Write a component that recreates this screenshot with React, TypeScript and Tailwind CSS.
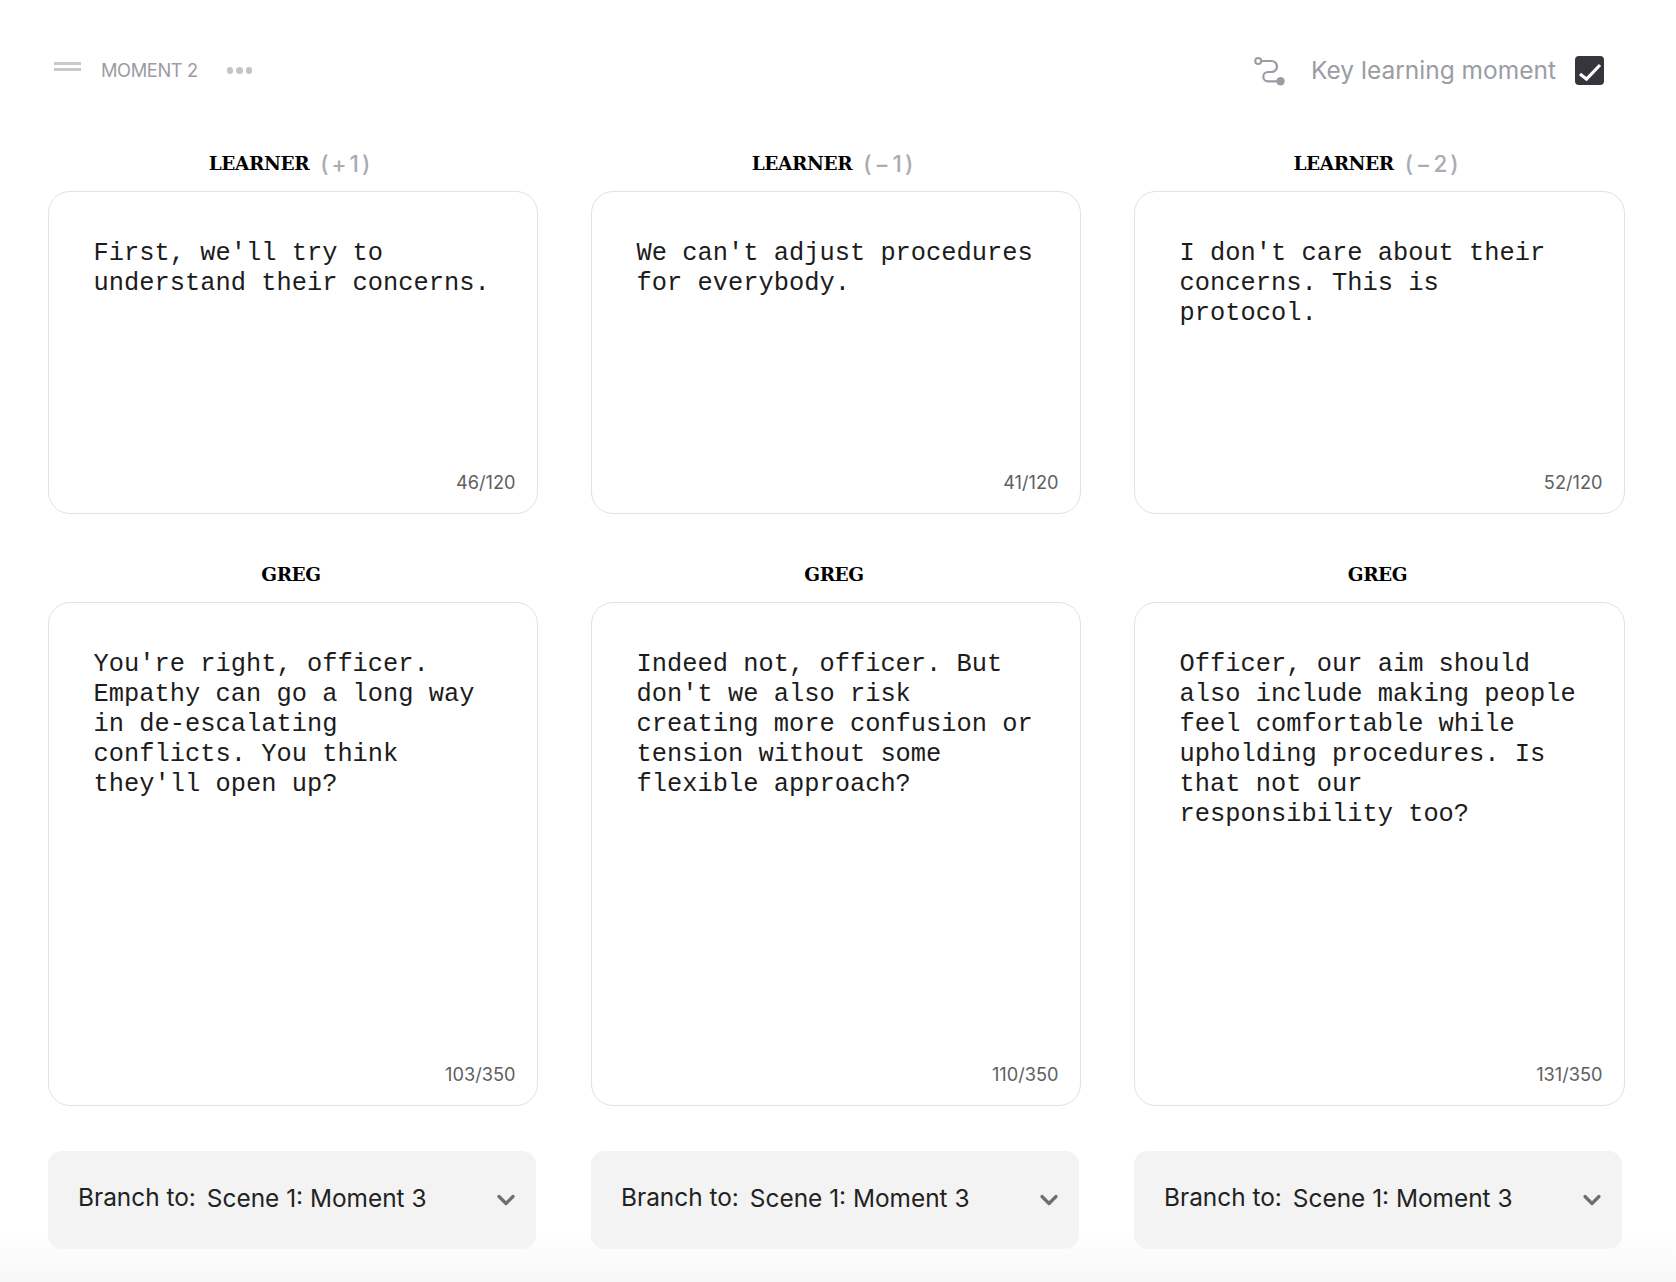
import React from "react";
import { ChevronDown } from "lucide-react";

const mono = "font-['Liberation_Mono','Courier_New',monospace]";
const sans = "font-['Inter','Noto_Sans',sans-serif]";

const columns = [
  { score: "(+1)", learner: "First, we'll try to understand their concerns.", lc: "46/120", greg: "You're right, officer. Empathy can go a long way in de-escalating conflicts. You think they'll open up?", gc: "103/350" },
  { score: "(−1)", learner: "We can't adjust procedures for everybody.", lc: "41/120", greg: "Indeed not, officer. But don't we also risk creating more confusion or tension without some flexible approach?", gc: "110/350" },
  { score: "(−2)", learner: "I don't care about their concerns. This is protocol.", lc: "52/120", greg: "Officer, our aim should also include making people feel comfortable while upholding procedures. Is that not our responsibility too?", gc: "131/350" },
];

function Label({ name, score }: { name: string; score?: string }) {
  return (
    <div className="h-[23px] flex justify-center items-center leading-[23px] pr-[4px]">
      <span className="font-bold text-black text-[18.5px] tracking-[-0.4px] font-['DejaVu_Serif',serif]">{name}</span>
      {score && <span className="ml-[11px] text-[#a9acb3] font-medium font-['Inter',sans-serif] text-[22.5px] tracking-[3px]">{score}</span>}
    </div>
  );
}

function Card({ text, count, h }: { text: string; count: string; h: string }) {
  return (
    <div className={`relative mt-[16px] ${h} w-full rounded-[22px] border border-[#e2e2e4] bg-white pl-[44.6px] pr-[40px] pt-[47px]`}>
      <p className={`text-[25.4px] leading-[30px] text-[#1c1c1c] ${mono}`}>{text}</p>
      <span className={`absolute right-[21.5px] bottom-[21px] text-[18.2px] leading-[20px] text-[#606060] ${sans}`}>{count}</span>
    </div>
  );
}

function PathIcon() {
  return (
    <svg width="34" height="32" viewBox="1.5 0 34 32" fill="none" className="text-[#9a9da5]">
      <circle cx="6.7" cy="6" r="3" stroke="currentColor" strokeWidth="2" />
      <path d="M9.7 6H20a5.5 5.5 0 0 1 0 11h-3.5a4.7 4.7 0 0 0 0 9.4H27" stroke="currentColor" strokeWidth="2.2" strokeLinecap="round" />
      <circle cx="29" cy="26.2" r="4.2" fill="currentColor" />
    </svg>
  );
}

export default function App() {
  return (
    <div className={`relative w-[1676px] h-[1282px] overflow-hidden bg-white pl-[48px] pr-[51px] pt-[55px] ${sans}`}>
      <div className="h-[31px] flex items-center justify-between">
        <div className="flex items-center pl-[6px]">
          <div className="flex flex-col gap-[3.5px] w-[27px] -mt-[8px]">
            <div className="h-[3px] bg-[#c9c9c9]" />
            <div className="h-[3px] bg-[#c9c9c9]" />
          </div>
          <span className="ml-[20px] mt-[1px] text-[18.3px] tracking-[-0.4px] text-[#9a9da3]">MOMENT 2</span>
          <div className="ml-[29px] flex gap-[3px]">
            <span className="w-[6.5px] h-[6.5px] rounded-full bg-[#c4c4c6]" />
            <span className="w-[6.5px] h-[6.5px] rounded-full bg-[#c4c4c6]" />
            <span className="w-[6.5px] h-[6.5px] rounded-full bg-[#c4c4c6]" />
          </div>
        </div>
        <div className="flex items-center mr-[21px]">
          <PathIcon />
          <span className="ml-[24px] text-[24.5px] text-[#9a9da3]">Key learning moment</span>
          <span className="ml-[19px] w-[29px] h-[29px] rounded-[4px] bg-[#34363b] block">
            <svg width="29" height="29" viewBox="0 0 29 29" fill="none">
              <path d="M5 18l6.5 5L25 9" stroke="#ffffff" strokeWidth="3.2" />
            </svg>
          </span>
        </div>
      </div>
      <div className="mt-[66px] grid grid-cols-[490px_490px_491px] gap-x-[53px]">
        {columns.map((c, i) => (
          <div key={i} className="flex flex-col">
            <Label name="LEARNER" score={c.score} />
            <Card text={c.learner} count={c.lc} h="h-[323px]" />
            <div className="h-[49px]" />
            <Label name="GREG" />
            <Card text={c.greg} count={c.gc} h="h-[504px]" />
            <div className="mt-[45px] h-[98px] w-[488px] rounded-[14px] bg-[#f3f3f3] pl-[30px] pr-[16px] pb-[3px] flex items-center text-[24.4px] text-[#222222]">
              <span className="-mt-[2px]">Branch to:</span>
              <span className="ml-[11px]">Scene 1: Moment 3</span>
              <ChevronDown size={28} strokeWidth={2.8} className="ml-auto mt-[2px] text-[#6e6e6e]" />
            </div>
          </div>
        ))}
      </div>
      <div className="absolute left-0 right-0 bottom-0 h-[50px] bg-gradient-to-b from-transparent to-[#f7f7f7]" />
    </div>
  );
}
